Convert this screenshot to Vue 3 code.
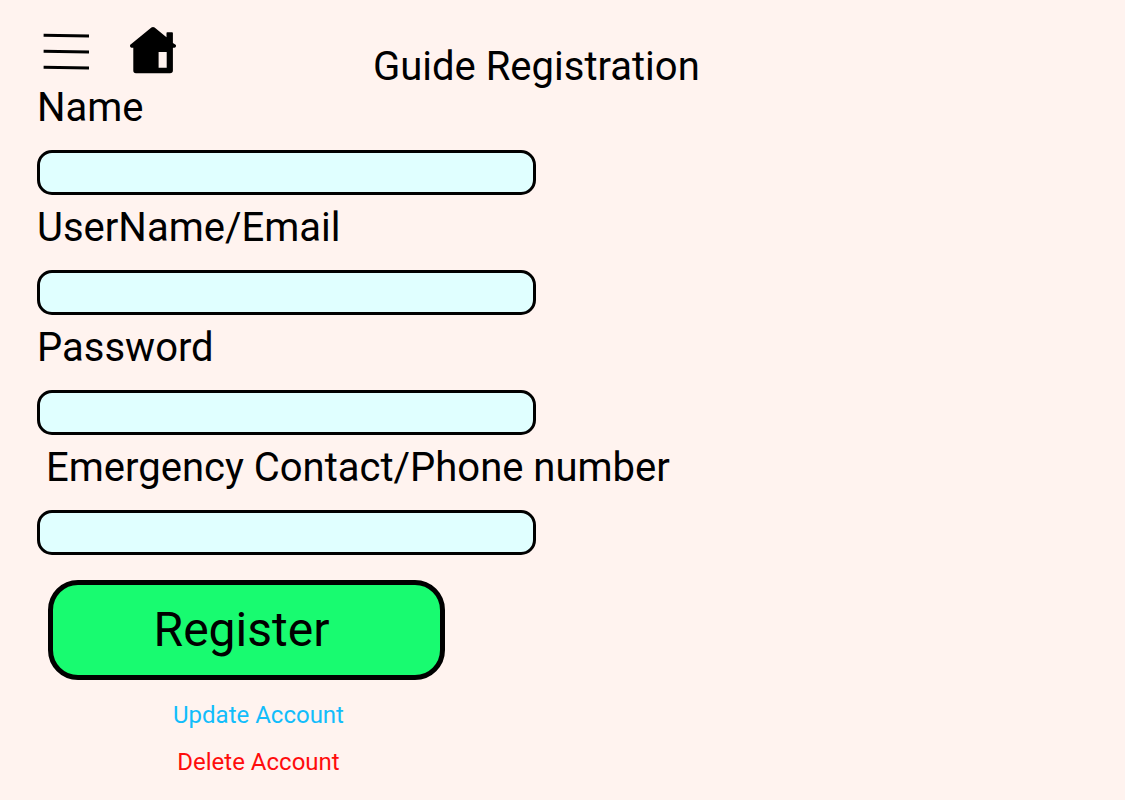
<script setup>
import { reactive } from 'vue'

const fields = [
  { id: 'name', label: 'Name', type: 'text' },
  { id: 'username', label: 'UserName/Email', type: 'text' },
  { id: 'password', label: 'Password', type: 'password' },
  { id: 'emergency', label: 'Emergency Contact/Phone number', type: 'tel', indented: true },
]
const form = reactive({ name: '', username: '', password: '', emergency: '' })
</script>

<template>
  <main class="page">
    <header class="top">
      <button class="icon-button" type="button" aria-label="Menu">
        <svg width="48" height="40" viewBox="0 0 48 40" fill="none" stroke="#000" stroke-width="3">
          <path d="M0.6 3.2 46 4.1M0.6 19.2 46 20.1M0.6 35.2 46 36.1" />
        </svg>
      </button>
      <a class="home" href="#" aria-label="Home">
        <svg width="48" height="48" viewBox="0 0 48 48">
          <path fill-rule="evenodd" d="M22.4 1.4Q24 .4 25.6 1.4L37.5 11.3V7Q37.5 6.2 38.3 6.2H43Q43.9 6.2 43.9 7V17L47 19Q47.4 21.4 45.5 21.8H43.9V44.5Q43.9 47.3 41 47.3H7Q4.3 47.3 4.3 44.5V21.8H2.5Q.7 21.4 1 19ZM29.6 26V41.7H37.7V26Z" />
        </svg>
      </a>
      <h1 class="title">Guide Registration</h1>
    </header>
    <form class="form" @submit.prevent>
      <div v-for="f in fields" :key="f.id" class="field">
        <label :for="f.id" :class="{ indented: f.indented }">{{ f.label }}</label>
        <input :id="f.id" v-model="form[f.id]" :type="f.type" />
      </div>
      <button class="register" type="submit">Register</button>
      <nav class="links">
        <a class="update" href="#">Update Account</a>
        <a class="delete" href="#">Delete Account</a>
      </nav>
    </form>
  </main>
</template>

<style>
body {
  background: #fff3ef;
}
</style>

<style scoped>
.page {
  box-sizing: border-box;
  padding: 26px 37px 0;
  font-family: Roboto, sans-serif;
  color: #000;
}
.top {
  display: flex;
  align-items: flex-start;
  height: 61px;
}
.icon-button {
  margin: 6px 0 0 6px;
  padding: 0;
  border: 0;
  background: none;
}
svg {
  display: block;
}
.home {
  margin-left: 38px;
  color: #000;
}
.title {
  margin: 17px 0 0 196px;
  font-size: 40px;
  line-height: 48px;
  font-weight: 400;
}
.form {
  display: flex;
  flex-direction: column;
  align-items: flex-start;
}
.field {
  width: 100%;
  margin-bottom: 12px;
}
label {
  display: block;
  margin-bottom: 21px;
  font-size: 40px;
  line-height: 42px;
}
.indented {
  padding-left: 9px;
}
input {
  display: block;
  box-sizing: border-box;
  width: 100%;
  max-width: 499px;
  height: 45px;
  padding: 0 12px;
  border: 3px solid #000;
  border-radius: 15px;
  background: #e0ffff;
  font: 24px Roboto, sans-serif;
}
.register {
  box-sizing: border-box;
  width: 100%;
  max-width: 397px;
  height: 100px;
  margin: 13px 0 0 11px;
  padding: 0 10px 2px 0;
  border: 5px solid #000;
  border-radius: 30px;
  background: #18fb70;
  color: #000;
  font: 48px Roboto, sans-serif;
}
.links {
  display: flex;
  flex-direction: column;
  align-items: center;
  gap: 19px;
  margin: 21px 0 0 136px;
  font-size: 24px;
  line-height: 28px;
}
.links a {
  text-decoration: none;
}
.update {
  color: #12bdfb;
}
.delete {
  color: #ff0c0c;
}
</style>
